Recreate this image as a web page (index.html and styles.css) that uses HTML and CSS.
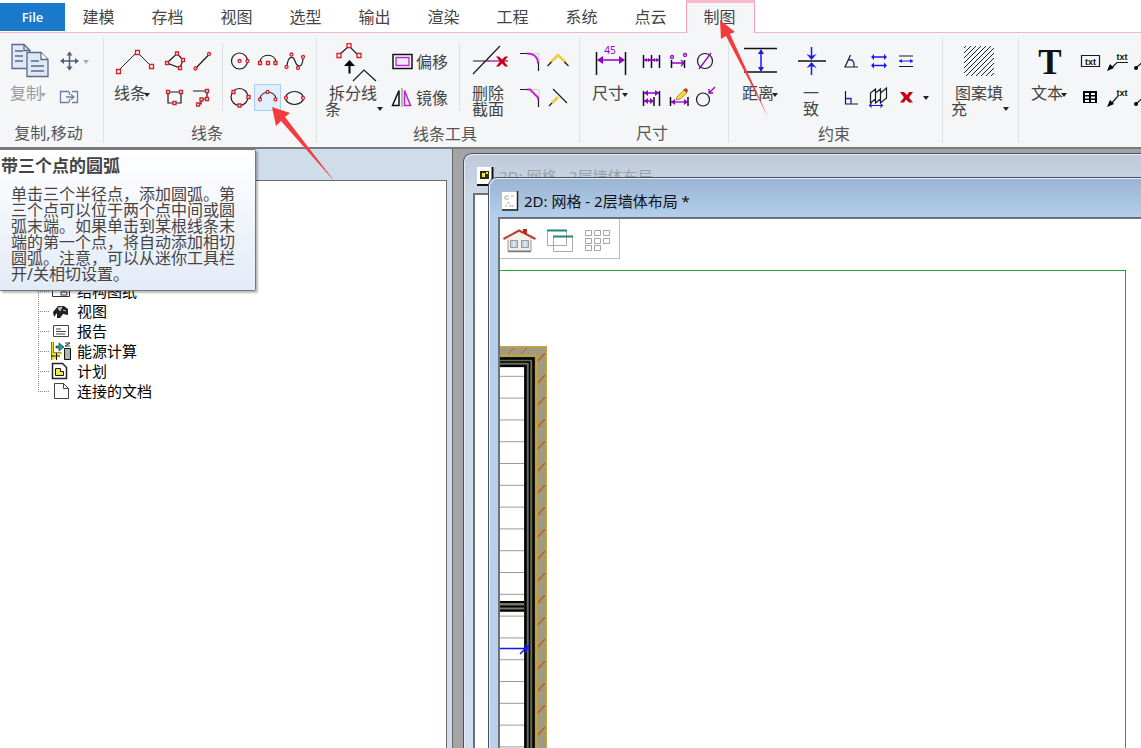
FILE: index.html
```html
<!DOCTYPE html>
<html lang="zh-CN">
<head>
<meta charset="utf-8">
<title>制图</title>
<link rel="stylesheet" href="styles.css">
</head>
<body>
<div class="app">
<nav class="tabs">
  <button class="file">File</button>
  <button class="tab">建模</button><button class="tab">存档</button><button class="tab">视图</button><button class="tab">选型</button><button class="tab">输出</button><button class="tab">渲染</button><button class="tab">工程</button><button class="tab">系统</button><button class="tab">点云</button><button class="tab active">制图</button>
</nav>

<div class="ribbon">
  <section class="group g-copy">
    <div class="tools">
      <button class="big muted">
        <svg viewBox="0 0 46 42"><g fill="#dfe8f5" stroke="#5a6b8c" stroke-width="1.3"><path d="M6 1.500h12l6 6v18h-18z"/><path d="M18 1.500v6h6" fill="none"/><path d="M9 8h8M9 13h8M9 18h8" /><path d="M21 9.500h14l7 7v17h-21z"/><path d="M35 9.500v7h7" fill="#fff"/><path d="M25 18h8M25 23h13M25 28h13"/></g></svg>
        <span class="cap">复制<i class="caret"></i></span>
      </button>
      <div class="smalls two">
        <button class="small" aria-label="移动"><svg viewBox="0 0 27 27"><path d="M5 13h17M13.500 4v18" stroke="#4d5f82" stroke-width="1.500"/><path d="M4 13l4-3v6zM23 13l-4-3v6zM13.500 3.500l-3 4h6zM13.500 22.500l-3-4h6z" fill="#4d5f82"/></svg></button>
        <span class="drop"><i class="caret pale"></i></span>
        <button class="small" aria-label="移动副本"><svg viewBox="0 0 27 27"><path d="M13 7.500H4.500v11H13M16 7.500h5.500v11H16M13.500 8v3M13.500 15v3M10 13h7M15 10.500l3 2.500-3 2.500" fill="none" stroke="#6d7fa5" stroke-width="1.300"/></svg></button>
      </div>
    </div>
    <h2>复制,移动</h2>
  </section>

  <section class="group g-line">
    <div class="tools">
      <button class="big">
        <svg viewBox="0 0 46 42"><path d="M8 28L27 9l14 14" stroke="#222" fill="none"/><g class="node"><path d="M6.500 26.500h4v4h-4zM25.500 7.500h4v4h-4zM39.500 21.500h4v4h-4z"/></g></svg>
        <span class="cap">线条<i class="caret"></i></span>
      </button>
      <div class="smalls two">
        <button class="small" aria-label="多边形"><svg viewBox="0 0 27 27"><path class="ink" d="M7 15L17 5.500l6 6.500-3 8z"/><path class="node" d="M5.500 13.500h3v3h-3zM15.500 4h3v3h-3zM21.500 10.500h3v3h-3zM18.500 18.500h3v3h-3z"/></svg></button>
        <button class="small" aria-label="直线"><svg viewBox="0 0 27 27"><path class="ink" d="M9 20L22 6.500"/><g class="node"><circle cx="8.500" cy="20.500" r="1.500"/><circle cx="22" cy="6" r="1.500"/></g></svg></button>
        <button class="small" aria-label="矩形"><svg viewBox="0 0 27 27"><path class="ink" d="M8 8h13v11H8z" stroke-width="1.500"/><path class="node" d="M6.500 6.500h3v3h-3zM19.500 6.500h3v3h-3zM13 17.500h3v3h-3z"/></svg></button>
        <button class="small" aria-label="折线"><svg viewBox="0 0 27 27"><path class="ink" d="M6 7h14v8h-6v5h-3" stroke-width="1.500"/><path class="node" d="M18.500 5.500h3v3h-3zM18.500 13.500h3v3h-3zM13 14h3v3h-3zM9.500 19h3v3h-3z"/></svg></button>
      </div>
      <i class="sep"></i>
      <div class="smalls three">
        <button class="small" aria-label="圆"><svg viewBox="0 0 27 27"><circle class="ink" cx="12.500" cy="13" r="8"/><g class="node"><circle cx="12.500" cy="13" r="1.500"/><circle cx="20.500" cy="13" r="1.500"/></g></svg></button>
        <button class="small" aria-label="圆心弧"><svg viewBox="0 0 27 27"><path class="ink" d="M6 14c1-9 15-9 16 0"/><path class="node" d="M4.500 13.500h3v3h-3zM12.500 13.500h3v3h-3zM20 13.500h3v3h-3z"/></svg></button>
        <button class="small" aria-label="样条曲线"><svg viewBox="0 0 27 27"><path class="ink" d="M6 18c1-10 6-11 8-5s7 8 8-2"/><g class="node"><circle cx="5.500" cy="19" r="1.500"/><circle cx="10.500" cy="6.500" r="1.500"/><circle cx="17" cy="20" r="1.500"/><circle cx="22" cy="9" r="1.500"/></g></svg></button>
        <button class="small" aria-label="三点圆"><svg viewBox="0 0 27 27"><circle class="ink" cx="12.500" cy="13" r="8.500"/><path class="node" d="M5 6.500h3v3h-3zM20 11.500h3v3h-3zM11 20h3v3h-3z"/></svg></button>
        <button class="small on" aria-label="带三个点的圆弧"><svg viewBox="0 0 27 27"><path class="ink" d="M6 15c1-9 15-9 16 0"/><g class="node"><circle cx="6" cy="15.500" r="1.500"/><circle cx="13.500" cy="8" r="1.500"/><circle cx="21.500" cy="15.500" r="1.500"/></g></svg></button>
        <button class="small" aria-label="椭圆"><svg viewBox="0 0 27 27"><ellipse class="ink" cx="13.500" cy="14" rx="9" ry="6.500"/><g class="node"><circle cx="5" cy="14" r="1.500"/><circle cx="22" cy="14" r="1.500"/></g></svg></button>
      </div>
    </div>
    <h2>线条</h2>
  </section>

  <section class="group g-edit">
    <div class="tools">
      <button class="big wide">
        <svg viewBox="0 0 60 42"><path d="M16 12L26 3l9 9M30 38l11-11 12 11" class="ink"/><path class="node" d="M14 10.500h4v4h-4zM24 .500h4v4h-4zM34 10.500h4v4h-4z"/><path d="M26.500 17l-5.500 6h4.500v7.500h2V23H32z" fill="#000"/></svg>
        <span class="cap wrap"><span>拆分线</span><span class="last">条<i class="caret"></i></span></span>
      </button>
      <div class="smalls one">
        <button class="labeled"><svg viewBox="0 0 27 27"><path d="M6 6.500h19v14H6z" fill="#fff" stroke="#111" stroke-width="1.500"/><path d="M9 9.500h13v8H9z" fill="#eef" stroke="#c020d0" stroke-width="1.300"/></svg>偏移</button>
        <button class="labeled"><svg viewBox="0 0 27 27"><path d="M12 6.500v15H5.500z" fill="none" stroke="#111" stroke-width="1.500"/><path d="M15 4v19" stroke="#777"/><path d="M17.500 6.500v15h6z" fill="none" stroke="#c020d0" stroke-width="1.500"/></svg>镜像</button>
      </div>
      <i class="sep"></i>
      <button class="big">
        <svg viewBox="0 0 46 42"><path class="ink" d="M5 18h16M5 31L32 3"/><path d="M20 18h20" stroke="#c020d0" stroke-width="1.500"/><path d="M28 13.500h3l3 3 3-3h3l-4 5 4 5h-3l-3-3-3 3h-3l4-5z" fill="#c60012"/></svg>
        <span class="cap">删除<br>截面</span>
      </button>
      <div class="smalls two">
        <button class="small" aria-label="圆角"><svg viewBox="0 0 27 27"><path d="M12 5.500h9v9" fill="none" stroke="#ccc"/><path class="ink" d="M2 5.500h9M20.500 14v9" stroke-width="1.500"/><path d="M9 5.500c7 0 11 4 11 10" fill="none" stroke="#c020d0" stroke-width="2"/></svg></button>
        <button class="small" aria-label="延伸"><svg viewBox="0 0 27 27"><path d="M5 15l8-8 8 8" fill="none" stroke="#edc947" stroke-width="2.500"/><path class="ink" d="M2.500 18l4-4M19.500 14l4 4"/></svg></button>
        <button class="small" aria-label="倒角"><svg viewBox="0 0 27 27"><path d="M12 5.500h9v9" fill="none" stroke="#ccc"/><path class="ink" d="M2 5.500h9M20.500 14v9" stroke-width="1.500"/><path d="M9 5.500h3l8 8v2" fill="none" stroke="#c020d0" stroke-width="2"/></svg></button>
        <button class="small" aria-label="修剪"><svg viewBox="0 0 27 27"><path d="M7 19l6-6" stroke="#edc947" stroke-width="3"/><path class="ink" d="M8 5l14 14M4 22l3-3"/></svg></button>
      </div>
    </div>
    <h2>线条工具</h2>
  </section>

  <section class="group g-dim">
    <div class="tools">
      <button class="big">
        <svg viewBox="0 0 46 42"><path d="M8.500 9v23M37.500 9v23" stroke="#111" stroke-width="1.500"/><path d="M10 17h26" stroke="#9300c8" stroke-width="1.500"/><path d="M9 17l6-4v8zM37 17l-6-4v8z" fill="#9300c8"/><text x="22" y="11" font-size="10" text-anchor="middle" fill="#9300c8">45</text></svg>
        <span class="cap">尺寸<i class="caret"></i></span>
      </button>
      <div class="smalls three">
        <button class="small" aria-label="链式尺寸"><svg viewBox="0 0 27 27"><path d="M5.500 7v13M13.500 7v13M21.500 7v13" stroke="#111" stroke-width="1.500"/><path class="dim" d="M6 12h15"/><path d="M6 12l3-2v4zM13 12l-3-2v4zM14 12l3-2v4zM21 12l-3-2v4z" fill="#9300c8"/></svg></button>
        <button class="small" aria-label="点尺寸"><svg viewBox="0 0 27 27"><path d="M6.500 12v8M19.500 12v8" stroke="#111" stroke-width="1.500"/><path class="dim" d="M7 15h12M16 12l3 3-3 3"/><circle class="dim" cx="7" cy="9" r="1.500"/><circle class="dim" cx="20" cy="7" r="1.500"/></svg></button>
        <button class="small" aria-label="直径"><svg viewBox="0 0 27 27"><circle class="ink" cx="13" cy="13" r="7.500" stroke-width="1.500"/><path d="M7 21L19 5" stroke="#9300c8" stroke-width="1.300"/></svg></button>
        <button class="small" aria-label="基线尺寸"><svg viewBox="0 0 27 27"><path d="M5.500 7v15M16 13v9M21.500 7v15" stroke="#111" stroke-width="1.500"/><path class="dim" d="M6 9h15M6 17h10"/><path d="M6 9l4-3v6zM21 9l-4-3v6zM6 17l4-3v6zM16 17l-4-3v6z" fill="#9300c8"/></svg></button>
        <button class="small" aria-label="编辑尺寸"><svg viewBox="0 0 27 27"><path d="M5.500 13v9M23 13v9" stroke="#111" stroke-width="1.500"/><path class="dim" d="M6 18h17"/><path d="M6 18l4-3v6zM23 18l-4-3v6z" fill="#9300c8"/><path d="M12 13l7-7 3 3-7 6-4 1z" fill="#f4dc30" stroke="#8d7515" stroke-width=".7"/><path d="M18 6l3-2 2 2-1 3z" fill="#b83b27"/></svg></button>
        <button class="small" aria-label="半径"><svg viewBox="0 0 27 27"><circle class="ink" cx="11" cy="15.500" r="6.500" stroke-width="1.500"/><path class="dim" d="M23 3l-6 6M17 5v4h4"/></svg></button>
      </div>
    </div>
    <h2>尺寸</h2>
  </section>

  <section class="group g-constraint">
    <div class="tools">
      <button class="big">
        <svg viewBox="0 0 46 42"><path d="M6 5.500h33M6 29h33" stroke="#111" stroke-width="1.500"/><path d="M23 8v19" stroke="#1818f0" stroke-width="1.500"/><path d="M23 6l-3 5h6zM23 29l-3-5h6z" fill="#1818f0"/></svg>
        <span class="cap">距离<i class="caret"></i></span>
      </button>
      <button class="big">
        <svg viewBox="0 0 46 42"><path d="M10 18h28" stroke="#111" stroke-width="1.500"/><path d="M23.500 4v10M23.500 22v10" stroke="#1818f0" stroke-width="1.500"/><path d="M23.500 17l-5-6 5 2 5-2zM23.500 19l-5 6 5-2 5 2z" fill="#1818f0"/></svg>
        <span class="cap mid">一<br>致</span>
      </button>
      <div class="smalls three">
        <button class="small" aria-label="角度"><svg viewBox="0 0 27 27"><path class="ink" d="M12.500 7L7 19h13"/><path d="M11 12l3 0 2 3v4" fill="none" stroke="#22a" stroke-width="1.300"/></svg></button>
        <button class="small" aria-label="等长"><svg viewBox="0 0 27 27"><path d="M7 9h14M7 17.500h14" stroke="#1818f0" stroke-width="1.300"/><path d="M6 9l3-3v6zM22 9l-3-3v6zM6 17.500l3-3v6zM22 17.500l-3-3v6z" fill="#1818f0"/></svg></button>
        <button class="small" aria-label="平行"><svg viewBox="0 0 27 27"><path class="ink" d="M7 8h14M7 18.500h14" stroke-width="1.500"/><path d="M7 13h14" stroke="#1818f0"/><path d="M7 13l3-2v4zM21 13l-3-2v4z" fill="#1818f0"/></svg></button>
        <button class="small" aria-label="垂直"><svg viewBox="0 0 27 27"><path class="ink" d="M7.500 7v13H20" stroke-width="1.500"/><path d="M8 14.500h5V20" fill="none" stroke="#22a" stroke-width="1.300"/></svg></button>
        <button class="small" aria-label="阵列"><svg viewBox="0 0 27 27"><path class="ink" d="M5.500 19V9l5-4v10zM10.500 19V9l5-4v10zM15.500 19V9l6-5v10z" stroke-width="1.300"/><path d="M5 21.500h12M7 19.500l-3 2 3 2M15 19.500l3 2-3 2" fill="none" stroke="#1818f0"/></svg></button>
        <button class="small" aria-label="删除约束"><svg viewBox="0 0 27 27"><path d="M8 8h4l3 3 2-3h4l-4 5.500 4 5h-4l-3-3-2 3H8l4-5z" fill="#c60012"/></svg></button>
      </div>
      <span class="drop low"><i class="caret"></i></span>
    </div>
    <h2>约束</h2>
  </section>

  <section class="group g-hatch">
    <div class="tools">
      <button class="big wide">
        <svg viewBox="0 0 60 42"><defs><pattern id="fill" width="5" height="5" patternUnits="userSpaceOnUse"><path d="M-1 6L6-1M-1 1l2-2M4 6l2-2" stroke="#222"/></pattern></defs><path d="M15 3h30v30H15z" fill="url(#fill)"/></svg>
        <span class="cap wrap"><span>图案填</span><span class="last">充<i class="caret"></i></span></span>
      </button>
    </div>
  </section>

  <section class="group g-text">
    <div class="tools">
      <button class="big">
        <svg viewBox="0 0 46 42"><text class="serif" x="23" y="31" text-anchor="middle">T</text></svg>
        <span class="cap">文本<i class="caret"></i></span>
      </button>
      <div class="smalls three">
        <button class="small" aria-label="文本框"><svg viewBox="0 0 27 27"><path class="ink" d="M4.500 7.500h18v11h-18z"/><text class="txt" x="13.500" y="16.500">txt</text></svg></button>
        <button class="small" aria-label="引线文本"><svg viewBox="0 0 27 27"><path class="ink" d="M24 14.500H13l-6 6"/><path d="M3 23l3-7 4 4z"/><text class="txt" x="18" y="11.500">txt</text></svg></button>
        <button class="small" aria-label="引线"><svg viewBox="0 0 27 27"><path class="ink" d="M5 20l9-8"/><circle cx="5" cy="20" r="2"/></svg></button>
        <button class="small" aria-label="表格"><svg viewBox="0 0 27 27"><path d="M6 7h14v12H6z"/><path d="M8 10h4M14 10h4M8 13.500h4M14 13.500h4M8 17h4M14 17h4" stroke="#fff" stroke-width="2"/></svg></button>
        <button class="small" aria-label="箭头文本"><svg viewBox="0 0 27 27"><path class="ink" d="M14 12l-7 8"/><path d="M3 23l3-7 4 4z"/><text class="txt" x="18" y="11.500">txt</text></svg></button>
        <button class="small" aria-label="点引线"><svg viewBox="0 0 27 27"><path class="ink" d="M5 20l9-8"/><circle cx="5" cy="20" r="2"/></svg></button>
      </div>
    </div>
  </section>
</div>

<main class="work">
  <aside class="dock">
    <div class="dock-head"></div>
    <ul class="tree">
      <li><svg viewBox="0 0 22 20"><path d="M2.500 4.500h17v11h-17z" fill="#fff" stroke="#333"/><path d="M11 11h6v3h-6z" fill="none" stroke="#333"/></svg>结构图纸</li>
      <li><svg viewBox="0 0 22 20"><path d="M3 11l5-6h6l4 3v6l-5-1-3 4H7v-5l-3 4z" fill="#222"/><path d="M8 7l4-1-2 4zM13 9l3 1" fill="#bbb" stroke="#bbb"/></svg>视图</li>
      <li><svg viewBox="0 0 22 20"><path d="M3.500 4.500h15v11h-15z" fill="#fff" stroke="#444"/><path d="M6 8h5M6 10.500h10M6 13h9" stroke="#444"/></svg>报告</li>
      <li><svg viewBox="0 0 22 20"><path d="M1.500 1v18M3.500 1v11h8" stroke="#111" fill="none"/><path d="M2.500 1v18M3 13h8M3 17h4" stroke="#f1e400" stroke-width="2"/><path d="M1 15h9M6.500 12v7" stroke="#111"/><path d="M6 5h3V2l5 4-5 4V7H6z" fill="#13a5a0" stroke="#111" stroke-width=".6"/><path d="M14.500 7.500h6v11h-6z" fill="#a9b8a9" stroke="#111"/><path d="M15 2h5l-5 3h5" stroke="#333" fill="none"/></svg>能源计算</li>
      <li><svg viewBox="0 0 22 20"><path d="M2.500 2.500h10l4 4v11h-14z" fill="#fff" stroke="#222" stroke-width="1.500"/><path d="M5.500 7.500h5v3h3v4h-8z" fill="#f5e93b" stroke="#111"/></svg>计划</li>
      <li><svg viewBox="0 0 22 20"><path d="M4.500 2.500h9l5 5v10h-14z" fill="#fafafa" stroke="#444"/><path d="M13.500 2.500v5h5" fill="none" stroke="#444"/></svg>连接的文档</li>
    </ul>
  </aside>

  <div class="mdi">
    <section class="window back">
      <header><svg viewBox="0 0 18 20"><path d="M1 1h15v17H1z" fill="#fff"/><path d="M16.500 1v18H1" fill="none" stroke="#111" stroke-width="2"/><path d="M4 5h9v8H4z" fill="#26310d"/><path d="M6 7h3v4H6zM10 6h2v2h-2z" fill="#f3e83b"/></svg>2D: 网格 - 2层墙体布局</header>
      <div class="client"></div>
    </section>
    <section class="window front">
      <header><svg viewBox="0 0 18 20"><path d="M1 1h15v17H1z" fill="#fff"/><path d="M16.500 0v19H1" fill="none" stroke="#222" stroke-width="1.500"/><path d="M4 5h4M4 8h4M10 5h3M4 5v3M6 12h3M4 15h2M8 15h5" stroke="#aaa"/></svg>2D: 网格 - 2层墙体布局 *</header>
      <div class="client">
        <div class="viewbar">
          <button aria-label="主页"><svg viewBox="0 0 36 30"><path d="M6 13h23v12H6z" fill="#f2efe7" stroke="#999"/><path d="M6 25.500h23" stroke="#777" stroke-width="1.500"/><path d="M17 5L5 14h25z" fill="#f8f3e8"/><path d="M1.500 13L17 4.500 33.500 13" fill="none" stroke="#bd3c2c" stroke-width="2"/><path d="M21 3h4v5l-4-2z" fill="#b52b20"/><path d="M8.500 14.500h7v7h-7zM19.500 14.500h7v7h-7z" fill="#b9d2e6" stroke="#999"/><path d="M12 15v6M23 15v6" stroke="#fff"/></svg></button>
          <button aria-label="窗口"><svg viewBox="0 0 36 30"><path d="M6.500 4.500h19v15h-19zM12.500 10.500h19v15h-19z" fill="#fff" stroke="#aaa"/><path d="M6 4.500h20M12 10.500h20" stroke="#25857e" stroke-width="2"/></svg></button>
          <button aria-label="网格"><svg viewBox="0 0 36 30"><g fill="#fff" stroke="#a5a5a5"><path d="M5.500 4.500h6v5h-6zM14.500 4.500h6v5h-6zM23.500 4.500h6v5h-6zM5.500 12.500h6v5h-6zM14.500 12.500h6v5h-6zM23.500 12.500h6v5h-6zM5.500 19.500h6v5h-6zM14.500 19.500h6v5h-6z"/></g></svg></button>
        </div>
        <div class="sheet">
          <svg class="wall" viewBox="0 0 47 1400" width="47" height="1400">
            <defs>
              <pattern id="brick" width="11" height="22" patternUnits="userSpaceOnUse" x="36"><path d="M2 15l7-8" stroke="#bb5f28" stroke-width="1.500"/></pattern>
              <pattern id="joist" width="24" height="21.800" patternUnits="userSpaceOnUse" y="9"><path d="M0 21.300h24" stroke="#999"/></pattern>
            </defs>
            <path d="M0 0h47v1400H35V11H0z" fill="#a09a80"/>
            <path d="M36 0h11v1400H36z" fill="url(#brick)"/>
            <path d="M8 8l6-6M21 8l6-6" stroke="#bb5f28"/>
            <path d="M0 .5h46.500V1400M0 9.500h36.500V1400" fill="none" stroke="#c9a632" stroke-width="1.300"/>
            <path d="M0 11h35v1389H24V21H0z" fill="#68695a"/>
            <path d="M0 12.500h33.500V1400M0 20h25.500V1400" fill="none" stroke="#000" stroke-width="2.500"/>
            <path d="M0 16h29.500V1400" fill="none" stroke="#000" stroke-width="1.500"/>
            <path d="M0 21.500h24V1400H0z" fill="#fff"/><path d="M0 21.500h24V1400H0z" fill="url(#joist)"/>
            <path d="M0 255h24v11H0z" fill="#777766"/><path d="M0 256h24M0 260.500h24M0 264.500h24" stroke="#000" stroke-width="2"/>
            <path d="M0 302.500h30M20 308l10-10M26 298v9" fill="none" stroke="#1515f0" stroke-width="1.500"/>
          </svg>
        </div>
      </div>
    </section>
  </div>
</main>

<div class="tooltip" role="tooltip">
  <strong>带三个点的圆弧</strong>
  <p>单击三个半径点，添加圆弧。第三个点可以位于两个点中间或圆弧末端。如果单击到某根线条末端的第一个点，将自动添加相切圆弧。注意，可以从迷你工具栏开/关相切设置。</p>
</div>
<svg class="pointer arc" viewBox="0 0 64 76"><path d="M0 0l18 6-5 4 50 65L9 14l-5 5z" fill="#f53b3b"/></svg>
<svg class="pointer draft" viewBox="0 0 48 98"><path d="M0 0l15 12-5 2 38 83L6 16l-5 3z" fill="#f53b3b"/></svg>
</div>
</body>
</html>
```

FILE: styles.css
```css
* { box-sizing: border-box; }
body {
  margin: 0;
  font: 16px/16px "Noto Sans", "Noto Sans CJK SC", sans-serif;
  color: #444;
  background: #fff;
}
button { font: inherit; color: inherit; background: none; border: 0; padding: 0; }
svg { display: block; flex: none; }
.app { position: relative; height: 100vh; display: flex; flex-direction: column; overflow: hidden; }

.tabs { flex: none; display: flex; height: 33px; border-bottom: 1px solid #f2b6c8; }
.file { width: 65px; margin: 3px 0 1px; background: #1979ca; color: #fff; font: 600 13px/28px "Open Sans", sans-serif; }
.tab { width: 69px; padding: 2px 2px 0 0; }
.tab.active { height: 33px; padding: 0 2px 3px 0; background: #f4f6f8; border: solid #f79db8; border-width: 3px 1px 0; border-top-color: #fbb9cd; }

.ribbon { flex: none; display: flex; height: 114px; background: #f4f6f8; overflow: hidden; }
.group { flex: none; display: flex; flex-direction: column; margin: 4px 0; padding: 6px 0 0 6px; border-right: 1px solid #dfe2e6; }
.g-copy { width: 104px; }
.g-line { width: 213px; }
.g-edit { width: 263px; }
.g-dim { width: 149px; padding-left: 8px; }
.g-constraint { width: 214px; padding-left: 9px; }
.g-hatch { width: 76px; }
.g-text { padding-left: 8px; border-right: 0; }
.group h2 { margin: 7px 0 0 -12px; font-size: 16px; line-height: 20px; font-weight: 400; text-align: center; color: #555; }
.tools { display: flex; gap: 4px; height: 74px; }
.big { width: 46px; display: flex; flex-direction: column; text-align: left; }
.big svg { width: 46px; height: 42px; }
.big.wide, .big.wide svg { width: 60px; }
.cap { padding-left: 4px; white-space: nowrap; }
.cap.mid { padding: 0; align-self: center; }
.cap.wrap { display: flex; flex-direction: column; width: 60px; padding-left: 6px; }
.cap .last { display: flex; align-items: center; justify-content: space-between; margin-left: -4px; }
.muted { color: #999; }
.caret { display: inline-block; vertical-align: middle; border: solid transparent; border-width: 4px 3px 0; border-top-color: #222; }
.cap > .caret { margin-left: -2px; }
.muted .caret, .caret.pale { border-top-color: #aaa; }
.smalls { display: grid; grid-auto-rows: 27px; row-gap: 9px; padding-top: 5px; }
.one { grid-template-columns: auto; }
.two { grid-template-columns: repeat(2, 27px); }
.three { grid-template-columns: repeat(3, 27px); }
.small svg, .labeled svg { width: 27px; height: 27px; }
.small.on { background: #e3eefb; box-shadow: inset 0 0 0 1px #a9cdf3; }
.labeled { display: flex; align-items: center; gap: 2px; }
.drop { display: flex; align-items: center; height: 27px; }
.drop.low { margin-top: 41px; }
.sep { width: 1px; height: 68px; margin-left: 4px; background: #dcdfe4; }
.g-edit .sep { margin: 0 4px 0 7px; }
.ink { fill: none; stroke: #1a1a1a; stroke-width: 1.2; }
.node { fill: #fff; stroke: #d3202a; stroke-width: 1.3; }
.dim { fill: none; stroke: #9300c8; stroke-width: 1.3; }
.serif { font: bold 35px/1 "Liberation Serif", serif; fill: #111; }
.txt { font: bold 9px "Liberation Sans", sans-serif; text-anchor: middle; fill: #111; }

.work { flex: 1; min-height: 0; display: flex; border-top: 2px solid #777b80; background: #a4a4a4; }
.dock { flex: none; width: 453px; display: flex; flex-direction: column; padding-right: 5px; background: #cfdcea; border-right: 1px solid #666; }
.dock-head { height: 31px; }
.tree { flex: 1; margin: 0; padding: 100px 0 0 38px; list-style: none; background: #fff; border: solid #666b72; border-width: 1px 1px 0 0; color: #000; font-size: 15px; line-height: 20px; }
.tree li { display: flex; gap: 5px; height: 20px; padding-left: 12px; background: repeating-linear-gradient(90deg, #888 0 1px, transparent 1px 2px) 0 10px / 12px 1px no-repeat, repeating-linear-gradient(#888 0 1px, transparent 1px 2px) 0 0 / 1px 100% no-repeat; }
.tree li:last-child { background-size: 12px 1px, 1px 10px; }
.tree svg { width: 22px; height: 20px; }

.mdi { flex: 1; position: relative; overflow: hidden; }
.window { position: absolute; right: -12px; bottom: 0; display: flex; flex-direction: column; padding-left: 9px; border: solid #4a5060; border-width: 1px 0 0 1px; border-radius: 9px 0 0 0; font-size: 15px; }
.window header { flex: none; display: flex; align-items: center; gap: 5px; height: 39px; padding: 6px 0 0 3px; }
.window header svg { width: 18px; height: 20px; }
.window .client { flex: 1; min-height: 0; border: solid #6d7178; border-width: 2px 0 0 2px; background: #fff; }
.back { left: 10px; top: 4px; color: #9aa0a8; background: linear-gradient(#becada, #cbd8e6 40px, #cfdff0); box-shadow: inset 1px 1px #e4ecf5; }
.back header { padding-top: 4px; }
.front { left: 35px; top: 28px; color: #111; background: linear-gradient(#9ab4d3, #b4d0ec 40px, #b9d1ec); box-shadow: inset 1px 1px #e8eef8; }
.front .client { display: flex; flex-direction: column; margin-right: 12px; }
.viewbar { flex: none; align-self: flex-start; display: flex; gap: 3px; height: 40px; padding: 5px 3px 0 2px; border: solid #bbb; border-width: 0 1px 1px 0; }
.viewbar svg { width: 36px; height: 30px; }
.sheet { flex: 1; min-height: 0; margin: 11px 15px 0 0; padding-top: 75px; border: solid #1fa52c; border-width: 1px 1px 0 0; overflow: hidden; }

.tooltip { position: absolute; left: 0; top: 149px; width: 256px; padding: 8px 10px 8px 1px; border: solid #75777c; border-width: 1px 1px 1px 0; border-radius: 0 2px 2px 0; background: linear-gradient(#fff, #e3ebf7); box-shadow: 2px 2px 2px #0004; }
.tooltip strong { display: block; font-size: 17px; line-height: 16px; }
.tooltip p { margin: 12px 0 0 10px; line-height: 16px; word-break: break-all; }
.pointer { position: absolute; pointer-events: none; }
.arc { left: 272px; top: 107px; width: 64px; height: 76px; }
.draft { left: 720px; top: 20px; width: 48px; height: 98px; }
```
